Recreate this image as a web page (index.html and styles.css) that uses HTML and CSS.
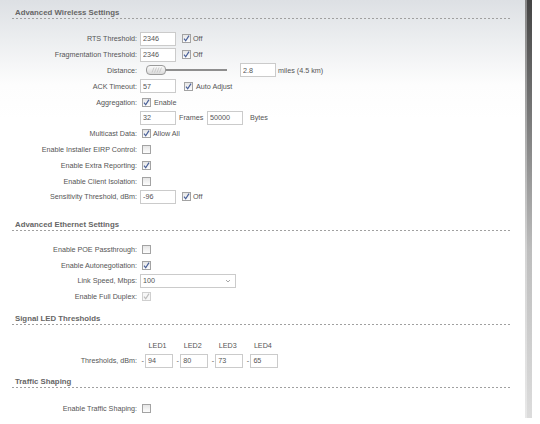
FILE: index.html
```html
<!DOCTYPE html>
<html>
<head>
<meta charset="utf-8">
<link rel="stylesheet" href="styles.css">
</head>
<body>
<div class="page">
  <main class="content">
    <section class="sec">
      <h2 class="sec-title">Advanced Wireless Settings</h2>
      <div class="form">
        <div class="lbl">RTS Threshold:</div>
        <div class="ctl"><input class="inp" type="text" value="2346"><span class="cb on after"><svg viewBox="0 0 9 9"><path d="M2 4.6 L3.7 6.8 L7 1.6"/></svg></span><span class="txt">Off</span></div>

        <div class="lbl">Fragmentation Threshold:</div>
        <div class="ctl"><input class="inp" type="text" value="2346"><span class="cb on after"><svg viewBox="0 0 9 9"><path d="M2 4.6 L3.7 6.8 L7 1.6"/></svg></span><span class="txt">Off</span></div>

        <div class="lbl">Distance:</div>
        <div class="ctl">
          <div class="slider">
            <span class="handle"><svg viewBox="0 0 18 8"><path d="M5 6.5 L7 1.5 M7.5 6.5 L9.5 1.5 M10 6.5 L12 1.5 M12.5 6.5 L14.5 1.5"/></svg></span>
            <span class="track"></span>
          </div>
          <input class="inp dist" type="text" value="2.8"><span class="txt">miles (4.5 km)</span>
        </div>

        <div class="lbl">ACK Timeout:</div>
        <div class="ctl"><input class="inp" type="text" value="57"><span class="cb on after wide"><svg viewBox="0 0 9 9"><path d="M2 4.6 L3.7 6.8 L7 1.6"/></svg></span><span class="txt t3">Auto Adjust</span></div>

        <div class="lbl">Aggregation:</div>
        <div class="ctl"><span class="cb on solo"><svg viewBox="0 0 9 9"><path d="M2 4.6 L3.7 6.8 L7 1.6"/></svg></span><span class="txt t3">Enable</span></div>

        <div class="lbl"></div>
        <div class="ctl"><input class="inp" type="text" value="32"><span class="txt t3">Frames</span><input class="inp bytes" type="text" value="50000"><span class="txt t7">Bytes</span></div>

        <div class="lbl">Multicast Data:</div>
        <div class="ctl"><span class="cb on solo"><svg viewBox="0 0 9 9"><path d="M2 4.6 L3.7 6.8 L7 1.6"/></svg></span><span class="txt">Allow All</span></div>

        <div class="lbl">Enable Installer EIRP Control:</div>
        <div class="ctl"><span class="cb solo"></span></div>

        <div class="lbl">Enable Extra Reporting:</div>
        <div class="ctl"><span class="cb on solo"><svg viewBox="0 0 9 9"><path d="M2 4.6 L3.7 6.8 L7 1.6"/></svg></span></div>

        <div class="lbl">Enable Client Isolation:</div>
        <div class="ctl"><span class="cb solo"></span></div>

        <div class="lbl">Sensitivity Threshold, dBm:</div>
        <div class="ctl"><input class="inp" type="text" value="-96"><span class="cb on after"><svg viewBox="0 0 9 9"><path d="M2 4.6 L3.7 6.8 L7 1.6"/></svg></span><span class="txt">Off</span></div>
      </div>
    </section>

    <section class="sec sec-wide">
      <h2 class="sec-title">Advanced Ethernet Settings</h2>
      <div class="form form-tight">
        <div class="lbl">Enable POE Passthrough:</div>
        <div class="ctl"><span class="cb solo"></span></div>

        <div class="lbl">Enable Autonegotiation:</div>
        <div class="ctl"><span class="cb on solo"><svg viewBox="0 0 9 9"><path d="M2 4.6 L3.7 6.8 L7 1.6"/></svg></span></div>

        <div class="lbl">Link Speed, Mbps:</div>
        <div class="ctl"><div class="select"><span>100</span><svg class="arrow" viewBox="0 0 6 4"><path d="M1 1 L3 3 L5 1"/></svg></div></div>

        <div class="lbl">Enable Full Duplex:</div>
        <div class="ctl"><span class="cb on dis solo"><svg viewBox="0 0 9 9"><path d="M2 4.6 L3.7 6.8 L7 1.6"/></svg></span></div>
      </div>
    </section>

    <section class="sec sec-led">
      <h2 class="sec-title">Signal LED Thresholds</h2>
      <div class="form">
        <div class="lbl"></div>
        <div class="ctl leds">
          <span class="grp"><span class="dash hide">-</span><span class="led">LED1</span></span>
          <span class="grp"><span class="dash hide">-</span><span class="led">LED2</span></span>
          <span class="grp"><span class="dash hide">-</span><span class="led">LED3</span></span>
          <span class="grp"><span class="dash hide">-</span><span class="led">LED4</span></span>
        </div>

        <div class="lbl">Thresholds, dBm:</div>
        <div class="ctl leds">
          <span class="grp"><span class="dash">-</span><input class="inp led-inp" type="text" value="94"></span>
          <span class="grp"><span class="dash">-</span><input class="inp led-inp" type="text" value="80"></span>
          <span class="grp"><span class="dash">-</span><input class="inp led-inp" type="text" value="73"></span>
          <span class="grp"><span class="dash">-</span><input class="inp led-inp" type="text" value="65"></span>
        </div>
      </div>
    </section>

    <section class="sec">
      <h2 class="sec-title">Traffic Shaping</h2>
      <div class="form">
        <div class="lbl">Enable Traffic Shaping:</div>
        <div class="ctl"><span class="cb solo"></span></div>
      </div>
    </section>
  </main>
  <div class="bar"></div>
</div>
</body>
</html>
```

FILE: styles.css
```css
html, body {
  margin: 0;
  padding: 0;
  background: #fff;
}

body {
  font-family: "Liberation Sans", Arial, sans-serif;
  font-size: 7.2px;
  color: #555;
}

.page {
  display: flex;
  width: 540px;
  height: 424px;
  overflow: hidden;
}

.content {
  width: 525px;
  height: 424px;
  box-sizing: border-box;
  padding-top: 7.5px;
  background: linear-gradient(#dde0e4 0, #eceef0 40px, #fdfdfd 85px, #fff 120px);
}

.bar {
  width: 7px;
  height: 418px;
  background:
    linear-gradient(to right, rgba(255,255,255,0.35) 0 2px, transparent 2px),
    linear-gradient(#444 0, #7a7a7a 120px, #bdbdbd 250px, #dcdcdc 418px);
}

.sec-wide {
  margin-top: 15px;
}

.sec + .sec:not(.sec-wide) {
  margin-top: 8px;
}

.sec + .sec.sec-led {
  margin-top: 9.5px;
}

.sec-title {
  margin: 0 0 0 12px;
  width: 499px;
  height: 11px;
  box-sizing: border-box;
  padding-left: 3px;
  line-height: 10px;
  font-size: 7.8px;
  font-weight: bold;
  color: #666;
  background: repeating-linear-gradient(to right, #a0a0a0 0 2px, transparent 2px 4px) left bottom / 100% 1px no-repeat;
}

.form {
  display: grid;
  grid-template-columns: 137px 1fr;
  column-gap: 3px;
  grid-auto-rows: 15.8px;
  align-items: center;
  margin-top: 12.5px;
}

.form.form-tight {
  margin-top: 11px;
  grid-auto-rows: 15.6px;
}

.lbl {
  text-align: right;
  white-space: nowrap;
  color: #555;
}

.ctl {
  display: flex;
  align-items: center;
  white-space: nowrap;
}

.inp {
  width: 36px;
  height: 14px;
  box-sizing: border-box;
  margin: 0;
  padding: 0 2px;
  border: 1px solid #cbcbcb;
  background: #fff;
  font: inherit;
  color: #555;
  outline: none;
}

.inp.dist {
  margin-left: 13px;
}

.inp.bytes {
  margin-left: 3.6px;
}

.txt {
  margin-left: 2px;
  color: #555;
}

.txt.t3 { margin-left: 3px; }
.txt.t7 { margin-left: 7px; }

.cb {
  display: inline-flex;
  width: 9px;
  height: 9px;
  box-sizing: border-box;
  border: 1px solid #a3a3a3;
  background: linear-gradient(#e6e6e6, #fdfdfd);
}

.cb svg {
  width: 9px;
  height: 9px;
  margin: -1px;
}

.cb svg path {
  fill: none;
  stroke: #4a6199;
  stroke-width: 1.2;
}

.cb.after { margin-left: 6px; }
.cb.after.wide { margin-left: 8px; }
.cb.solo { margin-left: 2px; }

.cb.dis {
  border-color: #cfcfcf;
  background: #f7f7f7;
}

.cb.dis svg path {
  stroke: #bdbdbd;
}

.slider {
  display: flex;
  align-items: center;
  width: 87px;
  box-sizing: border-box;
  padding-left: 6px;
}

.handle {
  display: inline-flex;
  width: 20px;
  height: 10px;
  box-sizing: border-box;
  border: 1px solid #9a9a9a;
  border-radius: 4px;
  background: linear-gradient(#fbfbfb, #d9d9d9);
}

.handle svg {
  width: 18px;
  height: 8px;
}

.handle svg path {
  stroke: #bcbcbc;
  stroke-width: 0.7;
  fill: none;
}

.track {
  flex: 1;
  height: 2px;
  background: #8e8e8e;
}

.select {
  display: flex;
  align-items: center;
  justify-content: space-between;
  width: 96px;
  height: 14px;
  box-sizing: border-box;
  padding: 0 4px 0 2px;
  border: 1px solid #cbcbcb;
  background: #fff;
  color: #555;
}

.select .arrow {
  width: 6px;
  height: 4px;
}

.select .arrow path {
  fill: none;
  stroke: #a8a8a8;
  stroke-width: 1;
}

.leds {
  gap: 3.5px;
  padding-left: 1.5px;
}

.grp {
  display: inline-flex;
  align-items: center;
  gap: 1.2px;
}

.dash {
  color: #555;
}

.dash.hide {
  visibility: hidden;
}

.led {
  display: inline-block;
  width: 28px;
  text-align: center;
  color: #555;
  padding-right: 3px;
  box-sizing: border-box;
}

.inp.led-inp {
  width: 28px;
}
```
